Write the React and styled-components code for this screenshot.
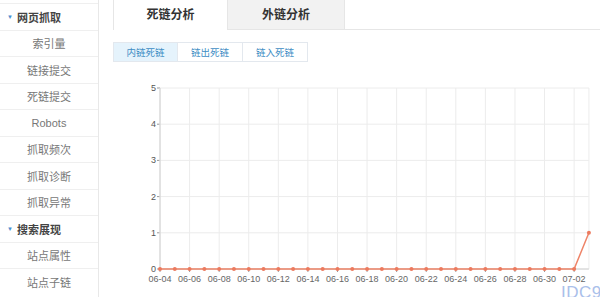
import React from "react";
import styled, { createGlobalStyle } from "styled-components";

const Global = createGlobalStyle`
  html, body { margin: 0; padding: 0; background: #fff; overflow: hidden; }
  body { font-family: "Liberation Sans", "Noto Sans CJK SC", sans-serif; }
`;

const Page = styled.div`
  display: flex;
  width: 600px;
  height: 297px;
  position: relative;
  overflow: hidden;
`;

const Sidebar = styled.div`
  width: 98px;
  flex: none;
  border-right: 1px solid #e8e8e8;
  padding-top: 3px;
  box-sizing: content-box;
`;

const Row = styled.div`
  height: 26.5px;
  box-sizing: border-box;
  border-top: 1px solid #efefef;
  display: flex;
  align-items: center;
  justify-content: ${(p) => (p.$head ? "flex-start" : "center")};
  padding-left: ${(p) => (p.$head ? "7px" : "0")};
  font-size: 11px;
  font-weight: ${(p) => (p.$head ? "bold" : "normal")};
  color: ${(p) => (p.$head ? "#444" : "#777")};
  font-family: "Liberation Sans", "Noto Sans CJK SC", sans-serif;
`;

const Caret = styled.span`
  font-size: 6px;
  color: #4a8fd0;
  margin-right: 4px;
`;

const Main = styled.div`
  flex: 1;
  display: flex;
  flex-direction: column;
`;

const TabBar = styled.div`
  display: flex;
  height: 30px;
  padding-left: 14px;
`;

const Tab = styled.div`
  width: ${(p) => p.$w}px;
  box-sizing: border-box;
  display: flex;
  align-items: center;
  justify-content: center;
  font-size: 12px;
  font-weight: bold;
  color: #333;
  background: ${(p) => (p.$active ? "#fff" : "#f2f2f2")};
  border-left: ${(p) => (p.$active ? "1px solid #e6e6e6" : "none")};
  border-right: 1px solid #e6e6e6;
  border-bottom: ${(p) => (p.$active ? "none" : "1px solid #e6e6e6")};
  padding-bottom: 3px;
`;

const TabFill = styled.div`
  flex: 1;
  border-bottom: 1px solid #e6e6e6;
`;

const SubTabs = styled.div`
  display: flex;
  margin: 12px 0 0 14px;
`;

const SubTab = styled.div`
  width: 65px;
  height: 20px;
  box-sizing: border-box;
  display: flex;
  align-items: center;
  justify-content: center;
  font-size: 9.5px;
  color: #3e8dc4;
  background: ${(p) => (p.$active ? "#e5f3fc" : "#fff")};
  border: 1px solid #e3e8ee;
  border-left: ${(p) => (p.$first ? "1px solid #e3e8ee" : "none")};
`;

const Watermark = styled.div`
  position: absolute;
  left: 561px;
  top: 284px;
  line-height: 1;
  font-family: "Liberation Sans", sans-serif;
  font-size: 17px;
  color: #aac0ea;
  letter-spacing: 0.5px;
`;

const Chart = styled.svg`
  position: absolute;
  left: 100px;
  top: 75px;
`;

const X0 = 160;
const STEP = 14.79;
const Y0 = 269;
const YSTEP = 36.2;
const dates = [];
{
  const days = [];
  for (let d = 4; d <= 30; d++) days.push(`06-${String(d).padStart(2, "0")}`);
  days.push("07-01", "07-02", "07-03");
  dates.push(...days);
}
const values = dates.map((_, i) => (i === dates.length - 1 ? 1 : 0));

function LineChart() {
  const right = X0 + STEP * 29;
  const pts = values.map((v, i) => [X0 + STEP * i, Y0 - v * YSTEP]);
  return (
    <Chart width="500" height="222" viewBox="100 75 500 222">
      {[0, 1, 2, 3, 4, 5].map((k) => (
        <g key={k}>
          <line x1={X0} x2={right} y1={Y0 - k * YSTEP} y2={Y0 - k * YSTEP} stroke="#ececec" strokeWidth="1" />
          <line x1={X0 - 3} x2={X0} y1={Y0 - k * YSTEP} y2={Y0 - k * YSTEP} stroke="#999" strokeWidth="1" />
          <text x={X0 - 4} y={Y0 - k * YSTEP + 3} fontSize="9" textAnchor="end" fill="#555" fontFamily="Liberation Sans, sans-serif">{k}</text>
        </g>
      ))}
      {dates.map((d, i) =>
        i % 2 === 0 ? (
          <g key={d}>
            <line x1={X0 + STEP * i} x2={X0 + STEP * i} y1={Y0 - 5 * YSTEP} y2={Y0} stroke="#ececec" strokeWidth="1" />
            <line x1={X0 + STEP * i} x2={X0 + STEP * i} y1={Y0} y2={Y0 + 3} stroke="#999" strokeWidth="1" />
            <text x={X0 + STEP * i} y={Y0 + 13} fontSize="9" textAnchor="middle" fill="#666" fontFamily="Liberation Sans, sans-serif">{d}</text>
          </g>
        ) : null
      )}
      <line x1={right} x2={right} y1={Y0 - 5 * YSTEP} y2={Y0} stroke="#ececec" strokeWidth="1" />
      <line x1={X0} x2={X0} y1={Y0 - 5 * YSTEP} y2={Y0} stroke="#d0d0d0" strokeWidth="1" />
      <line x1={X0} x2={right} y1={Y0} y2={Y0} stroke="#d0d0d0" strokeWidth="1" />
      <polyline points={pts.map((p) => p.join(",")).join(" ")} fill="none" stroke="#ee8468" strokeWidth="1.5" />
      {pts.map(([x, y], i) => (
        <circle key={i} cx={x} cy={y} r="2" fill="#ec7a5e" />
      ))}
    </Chart>
  );
}

const menu1 = ["索引量", "链接提交", "死链提交", "Robots", "抓取频次", "抓取诊断", "抓取异常"];
const menu2 = ["站点属性", "站点子链"];

export default function App() {
  return (
    <>
      <Global />
      <Page>
        <Sidebar>
          <Row $head><Caret>▼</Caret>网页抓取</Row>
          {menu1.map((m) => <Row key={m}>{m}</Row>)}
          <Row $head><Caret>▼</Caret>搜索展现</Row>
          {menu2.map((m) => <Row key={m}>{m}</Row>)}
        </Sidebar>
        <Main>
          <TabBar>
            <Tab $active $w={115}>死链分析</Tab>
            <Tab $w={117}>外链分析</Tab>
            <TabFill />
          </TabBar>
          <SubTabs>
            <SubTab $active $first>内链死链</SubTab>
            <SubTab>链出死链</SubTab>
            <SubTab>链入死链</SubTab>
          </SubTabs>
        </Main>
        <LineChart />
        <Watermark>IDC91</Watermark>
      </Page>
    </>
  );
}
